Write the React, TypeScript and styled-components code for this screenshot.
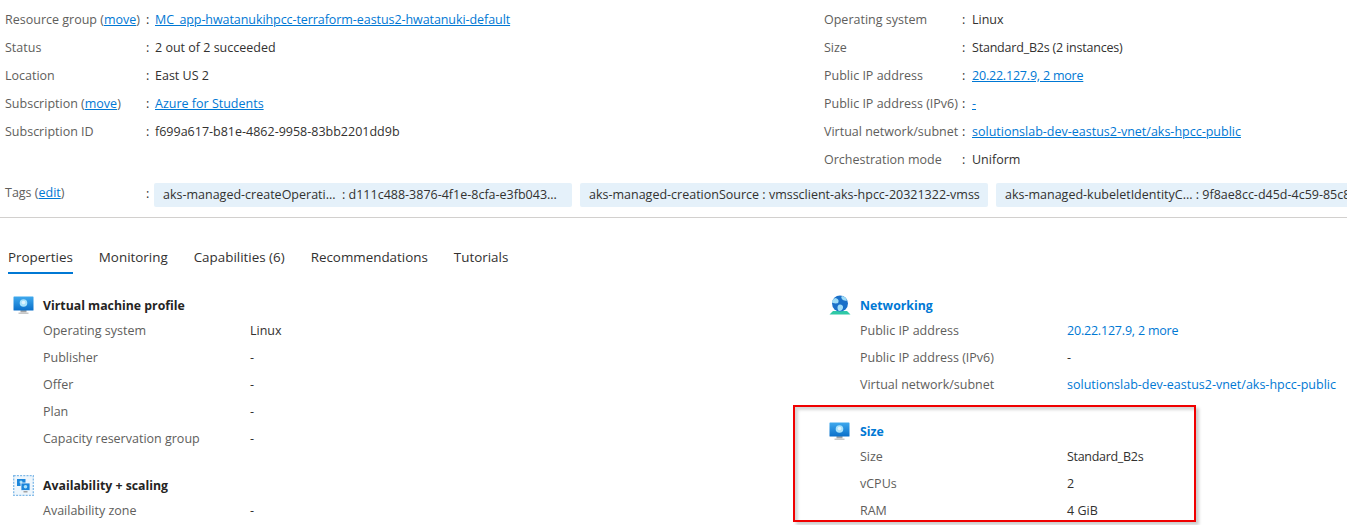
import { ReactNode } from "react";
import styled, { createGlobalStyle } from "styled-components";

const GlobalStyle = createGlobalStyle`
  html, body {
    margin: 0;
    padding: 0;
    background: #fff;
    overflow: hidden;
  }
  body {
    font-family: "Open Sans", "Noto Sans", "Liberation Sans", sans-serif;
    font-size: 12.5px;
    color: #323130;
  }
`;

const Page = styled.div`
  position: relative;
  width: 1347px;
  height: 525px;
  overflow: hidden;
`;

const Essentials = styled.div`
  display: grid;
  grid-template-columns: 819px 1fr;
  padding: 5px 0 0 5px;
`;

const EssentialColumn = styled.div`
  display: flex;
  flex-direction: column;
`;

const EssentialRow = styled.div`
  display: flex;
  align-items: center;
  height: 28px;
`;

const EssentialLabel = styled.div<{ $width: number }>`
  width: ${(p) => p.$width}px;
  flex: none;
  color: #605e5c;
  white-space: nowrap;
`;

const Colon = styled.span<{ $width: number }>`
  width: ${(p) => p.$width}px;
  flex: none;
  color: #323130;
`;

const TextLink = styled.a`
  color: #0078d4;
  text-decoration: underline;
`;

const PlainLink = styled.a`
  color: #0078d4;
  white-space: nowrap;
`;

const Tight = styled.span<{ $by: number }>`
  letter-spacing: -${(p) => p.$by}px;
`;

const TagsRow = styled.div`
  display: flex;
  align-items: flex-start;
  height: 35px;
  margin-top: 10px;
  padding-left: 5px;
  white-space: nowrap;
  overflow: hidden;
`;

const TagsLabel = styled.div`
  width: 141px;
  flex: none;
  color: #605e5c;
  line-height: 20px;
`;

const TagColon = styled(Colon)`
  line-height: 22px;
`;

const TagList = styled.div`
  display: flex;
  gap: 8px;
  margin-left: -1px;
`;

const Tag = styled.div<{ $width?: number }>`
  flex: none;
  height: 24px;
  line-height: 24px;
  padding: 0 9px;
  width: ${(p) => (p.$width ? `${p.$width}px` : "auto")};
  box-sizing: border-box;
  background: #e5f1fa;
  border-radius: 2px;
`;

const Divider = styled.div`
  height: 1px;
  margin-top: -1px;
  background: #d2d0ce;
`;

const TabBar = styled.div`
  display: flex;
  gap: 26px;
  height: 56px;
  padding: 30px 0 0 8px;
  box-sizing: border-box;
`;

const TabItem = styled.div<{ $active?: boolean }>`
  height: 26px;
  font-size: 13.4px;
  line-height: 19px;
  color: #323130;
  box-sizing: border-box;
  border-bottom: 2px solid ${(p) => (p.$active ? "#0078d4" : "transparent")};
`;

const Properties = styled.div`
  display: grid;
  grid-template-columns: 816px 1fr;
  padding: 19px 0 0 13px;
`;

const PropColumn = styled.div`
  display: flex;
  flex-direction: column;
`;

const Section = styled.section<{ $gap?: number }>`
  margin-bottom: ${(p) => p.$gap ?? 0}px;
`;

const SectionHead = styled.div`
  display: flex;
  align-items: center;
  height: 24px;
`;

const IconSlot = styled.div<{ $width: number }>`
  width: ${(p) => p.$width}px;
  flex: none;
  display: flex;
  align-items: center;
`;

const SectionTitle = styled.div<{ $link?: boolean }>`
  font-size: 12.3px;
  font-weight: 700;
  color: ${(p) => (p.$link ? "#0078d4" : "#252423")};
`;

const PropRow = styled.div<{ $indent: number; $labelWidth: number }>`
  display: grid;
  grid-template-columns: ${(p) => p.$labelWidth}px 1fr;
  align-items: center;
  height: 27px;
  padding-left: ${(p) => p.$indent}px;
  white-space: nowrap;
`;

const PropLabel = styled.div`
  color: #605e5c;
`;

const Callout = styled.div`
  position: absolute;
  left: 793px;
  top: 405px;
  width: 403px;
  height: 117px;
  box-sizing: border-box;
  border: 2px solid #f00000;
  box-shadow: 3px 3px 3px rgba(0, 0, 0, 0.2), inset 3px 3px 3px rgba(0, 0, 0, 0.16);
`;

const MonitorIcon = ({ id }: { id: string }) => (
  <svg width="21" height="19" viewBox="0 0 21 19">
    <defs>
      <linearGradient id={id} x1="0" y1="0" x2="0" y2="1">
        <stop offset="0" stopColor="#3fa9ee" />
        <stop offset="1" stopColor="#0a6fc9" />
      </linearGradient>
    </defs>
    <path d="M7.5 14h6v2.5h-6z" fill="#a3a3a3" />
    <path d="M5.5 16.5h10V18h-10z" fill="#c8c8c8" />
    <rect x="0.5" y="0.5" width="20" height="14" rx="0.6" fill={`url(#${id})`} />
    <circle cx="10.5" cy="7" r="3.8" fill="#a8e2fb" />
    <circle cx="10.5" cy="6.500" r="1.8" fill="#dff4fe" />
  </svg>
);

const ScaleIcon = () => (
  <svg width="21" height="21" viewBox="0 0 21 21">
    <rect x="0.7" y="0.7" width="19.6" height="19.6" fill="#eef6fc" stroke="#7fb9e8" strokeWidth="1.3" strokeDasharray="2 1.2" />
    <rect x="4" y="4" width="8.5" height="7" fill="#1c86db" />
    <circle cx="8" cy="7" r="1.5" fill="#a8e2fb" />
    <rect x="8" y="8" width="9" height="7.5" fill="#1c86db" stroke="#eef6fc" strokeWidth="0.8" />
    <circle cx="12.5" cy="11.7" r="1.8" fill="#a8e2fb" />
    <path d="M10.5 16h4v1.5h-4z" fill="#a3a3a3" />
  </svg>
);

const GlobeIcon = () => (
  <svg width="22" height="20" viewBox="0 0 22 20">
    <path d="M4 16h14l3.500 3.500H.5z" fill="#2fc9a6" />
    <circle cx="11" cy="8.500" r="8" fill="#1a6fc8" />
    <path d="M6 3c3 .5 4 2 3.500 4S6 8.500 4 8 3.500 4.500 6 3zM13 1c2.500.5 4.500 2 5 4.500-2 .5-4 0-5-1.500s-1-2 0-3zM11 9.500c2 0 3.500 1.500 3 3.500s-2 3-3.500 3-2-2-2-3.500.8-3 2.500-3z" fill="#9fdcf7" />
  </svg>
);

type PropItem = [string, ReactNode];

const PROFILE: PropItem[] = [
  ["Operating system", "Linux"],
  ["Publisher", "-"],
  ["Offer", "-"],
  ["Plan", "-"],
  ["Capacity reservation group", "-"],
];

const NETWORK: PropItem[] = [
  ["Public IP address", <PlainLink><Tight $by={0.2}>20.22.127.9, 2 more</Tight></PlainLink>],
  ["Public IP address (IPv6)", "-"],
  ["Virtual network/subnet", <PlainLink>solutionslab-dev-eastus2-vnet/aks-hpcc-public</PlainLink>],
];

const SIZE: PropItem[] = [
  ["Size", <Tight $by={0.3}>Standard_B2s</Tight>],
  ["vCPUs", "2"],
  ["RAM", "4 GiB"],
];

const LEFT_ESSENTIALS: PropItem[] = [
  ["Status", "2 out of 2 succeeded"],
  ["Location", "East US 2"],
];

const RIGHT_ESSENTIALS: PropItem[] = [
  ["Operating system", "Linux"],
  ["Size", <Tight $by={0.2}>Standard_B2s (2 instances)</Tight>],
  ["Public IP address", <TextLink><Tight $by={0.2}>20.22.127.9, 2 more</Tight></TextLink>],
  ["Public IP address (IPv6)", <TextLink>-</TextLink>],
  ["Virtual network/subnet", <TextLink>solutionslab-dev-eastus2-vnet/aks-hpcc-public</TextLink>],
  ["Orchestration mode", "Uniform"],
];

function Essential({ label, width, colon, children }: { label: ReactNode; width: number; colon: number; children: ReactNode }) {
  return (
    <EssentialRow>
      <EssentialLabel $width={width}>{label}</EssentialLabel>
      <Colon $width={colon}>:</Colon>
      <div>{children}</div>
    </EssentialRow>
  );
}

function PropGroup({ items, indent, labelWidth }: { items: PropItem[]; indent: number; labelWidth: number }) {
  return (
    <>
      {items.map(([label, value]) => (
        <PropRow key={label} $indent={indent} $labelWidth={labelWidth}>
          <PropLabel>{label}</PropLabel>
          <div>{value}</div>
        </PropRow>
      ))}
    </>
  );
}

export default function App() {
  return (
    <Page>
      <GlobalStyle />
      <Essentials>
        <EssentialColumn>
          <Essential width={141} colon={9} label={<>Resource group (<TextLink>move</TextLink>)</>}>
            <TextLink><Tight $by={0.07}>MC_app-hwatanukihpcc-terraform-eastus2-hwatanuki-default</Tight></TextLink>
          </Essential>
          {LEFT_ESSENTIALS.map(([label, value]) => (
            <Essential key={label} width={141} colon={9} label={label}>
              {value}
            </Essential>
          ))}
          <Essential width={141} colon={9} label={<>Subscription (<TextLink>move</TextLink>)</>}>
            <TextLink>Azure for Students</TextLink>
          </Essential>
          <Essential width={141} colon={9} label="Subscription ID">
            f699a617-b81e-4862-9958-83bb2201dd9b
          </Essential>
        </EssentialColumn>
        <EssentialColumn>
          {RIGHT_ESSENTIALS.map(([label, value]) => (
            <Essential key={label} width={138} colon={10} label={label}>
              {value}
            </Essential>
          ))}
        </EssentialColumn>
      </Essentials>
      <TagsRow>
        <TagsLabel>
          Tags (<TextLink>edit</TextLink>)
        </TagsLabel>
        <TagColon $width={9}>:</TagColon>
        <TagList>
          <Tag $width={418}>aks-managed-createOperati... &nbsp;: d111c488-3876-4f1e-8cfa-e3fb043...</Tag>
          <Tag $width={408}>aks-managed-creationSource : vmssclient-aks-hpcc-20321322-vmss</Tag>
          <Tag>aks-managed-kubeletIdentityC... : 9f8ae8cc-d45d-4c59-85c8</Tag>
        </TagList>
      </TagsRow>
      <Divider />
      <TabBar>
        <TabItem $active>Properties</TabItem>
        <TabItem>Monitoring</TabItem>
        <TabItem>Capabilities (6)</TabItem>
        <TabItem>Recommendations</TabItem>
        <TabItem>Tutorials</TabItem>
      </TabBar>
      <Properties>
        <PropColumn>
          <Section $gap={21}>
            <SectionHead>
              <IconSlot $width={30}><MonitorIcon id="screen-profile" /></IconSlot>
              <SectionTitle>Virtual machine profile</SectionTitle>
            </SectionHead>
            <PropGroup items={PROFILE} indent={30} labelWidth={207} />
          </Section>
          <Section>
            <SectionHead>
              <IconSlot $width={30}><ScaleIcon /></IconSlot>
              <SectionTitle>Availability + scaling</SectionTitle>
            </SectionHead>
            <PropGroup items={[["Availability zone", "-"]]} indent={30} labelWidth={207} />
          </Section>
        </PropColumn>
        <PropColumn>
          <Section $gap={21}>
            <SectionHead>
              <IconSlot $width={31}><GlobeIcon /></IconSlot>
              <SectionTitle $link>Networking</SectionTitle>
            </SectionHead>
            <PropGroup items={NETWORK} indent={31} labelWidth={207} />
          </Section>
          <Section>
            <SectionHead>
              <IconSlot $width={31}><MonitorIcon id="screen-size" /></IconSlot>
              <SectionTitle $link>Size</SectionTitle>
            </SectionHead>
            <PropGroup items={SIZE} indent={31} labelWidth={207} />
          </Section>
        </PropColumn>
      </Properties>
      <Callout />
    </Page>
  );
}
